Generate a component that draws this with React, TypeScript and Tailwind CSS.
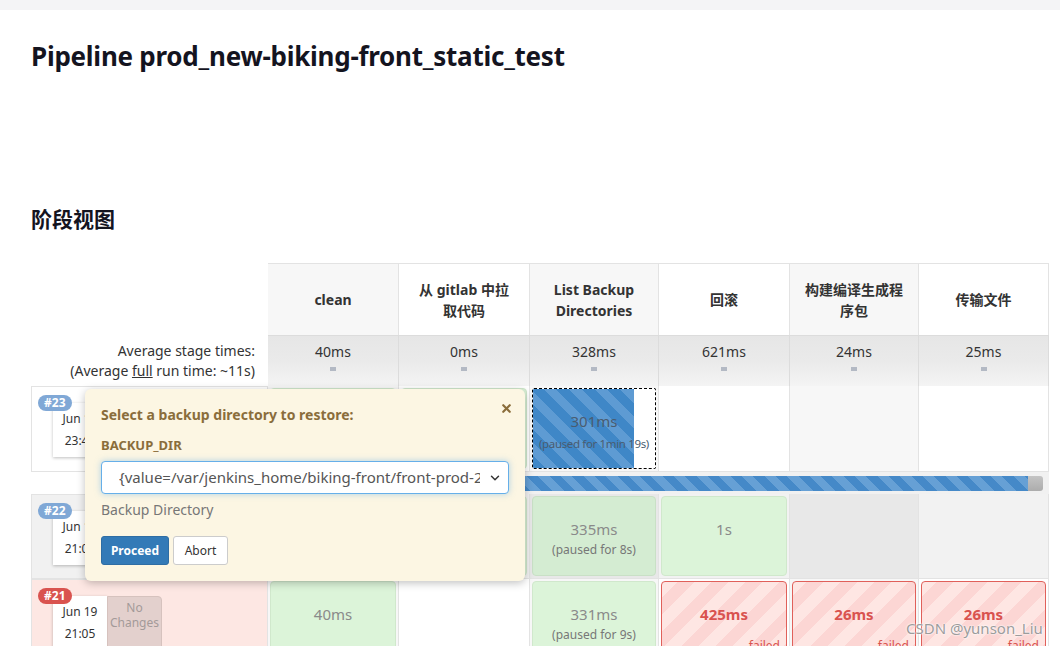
import React from "react";
import { X, ChevronDown } from "lucide-react";

const grid = "grid grid-cols-[237px_131px_131px_129px_131px_129px_130px]";

const blueStripes =
  "bg-[repeating-linear-gradient(45deg,#3f87c7_0px,#3f87c7_9px,#5e9bd3_9px,#5e9bd3_18px)]";
const barStripes =
  "bg-[repeating-linear-gradient(45deg,#4589c8_0px,#4589c8_8px,#66a0d5_8px,#66a0d5_16px)]";
const redStripes =
  "bg-[repeating-linear-gradient(-45deg,#fcd6d4_0px,#fcd6d4_12px,#fee6e3_12px,#fee6e3_24px)]";

const Header = ({ children, shade }: { children: React.ReactNode; shade?: boolean }) => (
  <div
    className={`flex h-[72px] items-center justify-center border-r border-t border-[#e3e3e3] text-center text-[14px] font-bold leading-[21px] text-[#333] ${
      shade ? "bg-[#f7f7f7]" : "bg-white"
    }`}
  >
    <div>{children}</div>
  </div>
);

const Avg = ({ value }: { value: string }) => (
  <div className="h-[51px] border-r border-t border-[#dcdcdc] bg-gradient-to-b from-[#e6e6e6] via-[#eaeaea] to-[#f4f4f4] pt-[6px] text-center text-[14px] leading-[20px] text-[#333]">
    {value}
    <div className="mx-auto mt-[5px] h-[4px] w-[6px] bg-[#b3b9c4]" />
  </div>
);

const Cell = ({ bg, children }: { bg: string; children?: React.ReactNode }) => (
  <div className={`h-full border-r border-b border-[#e3e3e3] p-[2px] ${bg}`}>{children}</div>
);

// green "success" box; hidden cells under the popup get no text
const Ok = ({ value, sub, dark }: { value?: string; sub?: string; dark?: boolean }) => (
  <div
    className={`h-full rounded-[4px] border pt-[22px] text-center text-[15px] leading-[20px] text-[#8a8a8a] ${
      dark ? "border-[#c9e0c6] bg-[#d4ecd2]" : "border-[#d0e8cc] bg-[#dcf4d9]"
    }`}
  >
    {value}
    {sub && <div className="mt-[3px] text-[12px] leading-[16px] text-[#777]">{sub}</div>}
  </div>
);

const Failed = ({ value }: { value: string }) => (
  <div
    className={`h-full rounded-[4px] border border-[#e0605a] pt-[22px] text-center text-[15px] font-bold leading-[20px] text-[#d9534f] ${redStripes}`}
  >
    {value}
    <div className="mt-[14px] pr-[6px] text-right text-[12px] font-normal leading-[16px]">failed</div>
  </div>
);

const Run = ({
  num,
  time,
  bg,
  badge,
  noChanges,
}: {
  num: string;
  time: string;
  bg: string;
  badge: string;
  noChanges?: boolean;
}) => (
  <div className={`h-full border border-[#e3e3e3] pl-[6px] pt-[8px] ${bg}`}>
    <span
      className={`relative z-10 block w-fit rounded-full px-[6px] text-[12px] font-bold leading-[16px] text-white ${badge}`}
    >
      #{num}
    </span>
    <div className="-mt-[8px] ml-[15px] flex">
      <div className="w-[54px] bg-white pb-[5px] pt-[5px] text-center text-[12px] leading-[22px] text-[#333] shadow-[0_1px_3px_rgba(0,0,0,0.25)]">
        Jun 19
        <br />
        {time}
      </div>
      {noChanges && (
        <div className="w-[55px] rounded-tr-[4px] border border-[#d6c2be] bg-[#e3d0cd] pt-[3px] text-center text-[12px] leading-[15px] text-[#a39a99]">
          No
          <br />
          Changes
        </div>
      )}
    </div>
  </div>
);

export default function App() {
  return (
    <div
      className="relative h-[646px] w-full overflow-hidden bg-white"
      style={{ fontFamily: '"Noto Sans", "Noto Sans CJK SC", sans-serif' }}
    >
      <div className="h-[10px] bg-[#f4f4f6]" />
      <h1 className="ml-[31px] mt-[30px] text-[26px] font-bold leading-[32px] tracking-[-0.25px] text-[#14141f]">
        Pipeline prod_new-biking-front_static_test
      </h1>
      <h2 className="ml-[31px] mt-[133px] text-[21px] font-bold leading-[28px] text-[#14141f]">阶段视图</h2>

      <div className="relative ml-[31px] mt-[30px] w-[1018px]">
        {/* stage headers */}
        <div className={grid}>
          <div />
          <Header shade>clean</Header>
          <Header>
            从 gitlab 中拉
            <br />
            取代码
          </Header>
          <Header shade>
            List Backup
            <br />
            Directories
          </Header>
          <Header>回滚</Header>
          <Header shade>
            构建编译生成程
            <br />
            序包
          </Header>
          <Header>传输文件</Header>
        </div>

        {/* averages */}
        <div className={grid}>
          <div className="h-[51px] pr-[13px] pt-[6px] text-right text-[14px] leading-[20px] text-[#333]">
            Average stage times:
            <br />
            (Average <span className="underline">full</span> run time: ~11s)
          </div>
          <Avg value="40ms" />
          <Avg value="0ms" />
          <Avg value="328ms" />
          <Avg value="621ms" />
          <Avg value="24ms" />
          <Avg value="25ms" />
        </div>

        {/* #23 */}
        <div className={`${grid} h-[86px]`}>
          <Run num="23" time="23:41" bg="bg-white" badge="bg-[#80a8d6]" />
          <Cell bg="bg-[#f7f7f7]">
            <Ok />
          </Cell>
          <Cell bg="bg-white">
            <Ok />
          </Cell>
          <Cell bg="bg-[#f7f7f7]">
            <div className="relative h-full overflow-hidden rounded-[2px] border border-dashed border-black bg-white">
              <div className={`absolute inset-y-0 left-0 w-[83%] ${blueStripes}`} />
              <div className="relative pt-[22px] text-center text-[15px] leading-[20px] text-[#4a5c70]">
                301ms
                <div className="mt-[5px] whitespace-nowrap text-[11.5px] leading-[16px] tracking-[-0.35px]">
                  (paused for 1min 19s)
                </div>
              </div>
            </div>
          </Cell>
          <Cell bg="bg-white" />
          <Cell bg="bg-[#f7f7f7]" />
          <Cell bg="bg-white" />
        </div>

        {/* progress */}
        <div className={`${grid} h-[22px]`}>
          <div />
          <div className="col-span-6 flex items-center bg-[#f1f1f1] pl-[2px] pr-[6px]">
            <div className="flex h-[15px] flex-1 overflow-hidden rounded-[3px]">
              <div className={`flex-1 ${barStripes}`} />
              <div className="w-[15px] bg-gradient-to-b from-[#c4c4c4] to-[#acacac]" />
            </div>
          </div>
        </div>

        {/* #22 */}
        <div className={`${grid} h-[85px]`}>
          <Run num="22" time="21:08" bg="bg-[#f1f1f1]" badge="bg-[#80a8d6]" />
          <Cell bg="bg-[#e8e8e8]">
            <Ok dark />
          </Cell>
          <Cell bg="bg-[#f2f2f2]">
            <Ok />
          </Cell>
          <Cell bg="bg-[#e8e8e8]">
            <Ok value="335ms" sub="(paused for 8s)" dark />
          </Cell>
          <Cell bg="bg-[#f2f2f2]">
            <Ok value="1s" />
          </Cell>
          <Cell bg="bg-[#e8e8e8]" />
          <Cell bg="bg-[#f2f2f2]" />
        </div>

        {/* #21 */}
        <div className={`${grid} h-[85px]`}>
          <Run num="21" time="21:05" bg="bg-[#fde7e3]" badge="bg-[#d9534f]" noChanges />
          <Cell bg="bg-[#f7f7f7]">
            <Ok value="40ms" />
          </Cell>
          <Cell bg="bg-white" />
          <Cell bg="bg-[#f7f7f7]">
            <Ok value="331ms" sub="(paused for 9s)" />
          </Cell>
          <Cell bg="bg-white">
            <Failed value="425ms" />
          </Cell>
          <Cell bg="bg-[#f7f7f7]">
            <Failed value="26ms" />
          </Cell>
          <Cell bg="bg-white">
            <Failed value="26ms" />
          </Cell>
        </div>

        {/* input popup */}
        <div className="absolute left-[54px] top-[126px] z-20 h-[192px] w-[440px] rounded-[6px] bg-[#fcf6e3] px-[16px] pt-[15px] shadow-[0_2px_8px_rgba(0,0,0,0.25)]">
          <div className="flex items-start justify-between">
            <div className="text-[14px] font-bold leading-[22px] text-[#8a6d3b]">
              Select a backup directory to restore:
            </div>
            <X size={13} strokeWidth={4} className="mr-[-4px] mt-[-2px] text-[#8a6d3b]" />
          </div>
          <div className="mt-[9px] text-[13px] font-bold leading-[20px] text-[#8a6d3b]">BACKUP_DIR</div>
          <div className="mt-[6px] flex h-[33px] w-[408px] items-center rounded-[4px] border border-[#66afe9] bg-white pl-[17px] pr-[6px] shadow-[0_0_6px_rgba(102,175,233,0.5)]">
            <div className="flex-1 overflow-hidden whitespace-nowrap text-[15px] text-[#555]">
              {"{value=/var/jenkins_home/biking-front/front-prod-2023-06-19}"}
            </div>
            <ChevronDown size={14} strokeWidth={2.5} className="ml-[8px] text-[#333]" />
          </div>
          <div className="mt-[6px] text-[14px] leading-[20px] text-[#777]">Backup Directory</div>
          <div className="mt-[16px] flex gap-[4px]">
            <button className="h-[29px] w-[68px] rounded-[3px] border border-[#2e6da4] bg-[#337ab7] text-[12px] font-bold text-white">
              Proceed
            </button>
            <button className="h-[29px] w-[55px] rounded-[3px] border border-[#ccc] bg-white text-[12px] text-[#333]">
              Abort
            </button>
          </div>
        </div>
      </div>

      <div className="absolute left-[906px] top-[618px] text-[15px] leading-[20px] text-[#9c9c9c] [text-shadow:0_0_2px_#fff,0_0_2px_#fff]">
        CSDN @yunson_Liu
      </div>
    </div>
  );
}
